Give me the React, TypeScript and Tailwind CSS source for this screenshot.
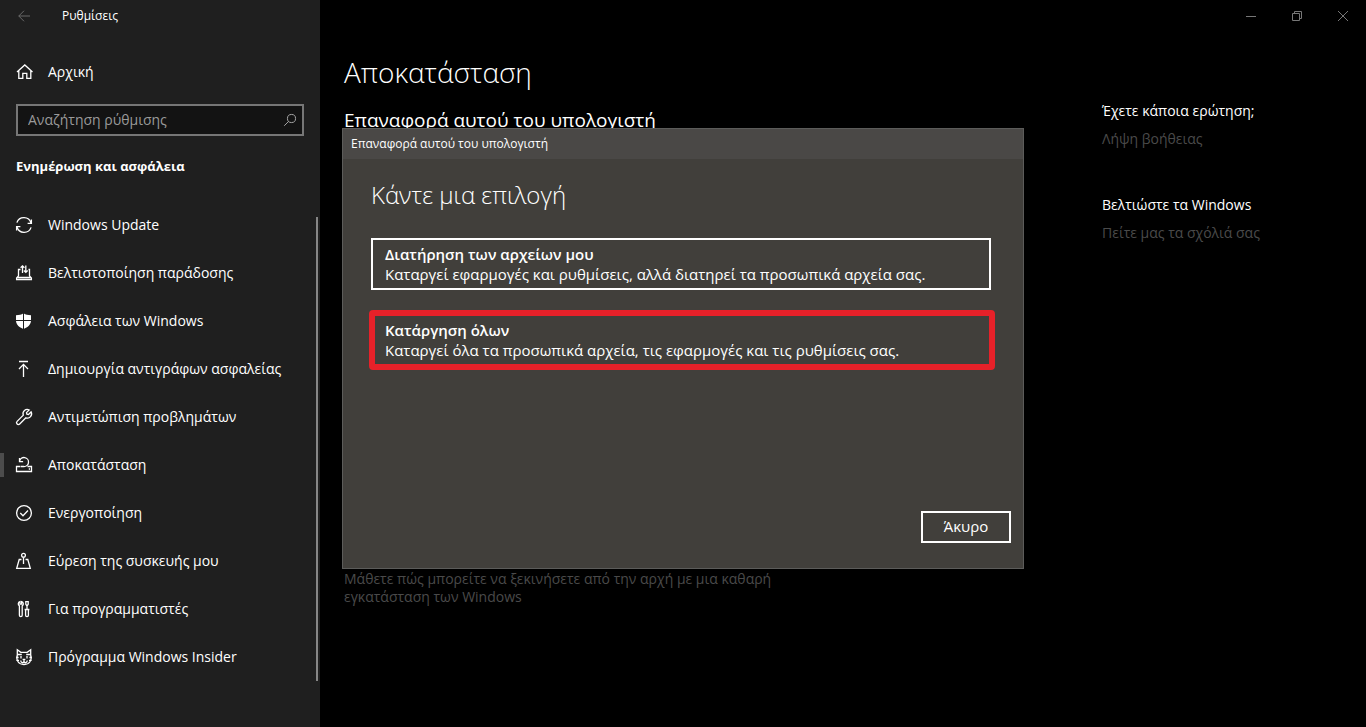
import type { ReactNode } from "react";

const navItems: { label: string; icon: ReactNode; active?: boolean }[] = [
  {
    label: "Windows Update",
    icon: (
      <>
        <path d="M.9 5.6A7.4 7.4 0 0 1 15 6M15.1 10.4A7.4 7.4 0 0 1 1 10" />
        <path d="M15.4 2.6V6.4H11.6M.6 13.4V9.6H4.4" />
      </>
    ),
  },
  {
    label: "Βελτιστοποίηση παράδοσης",
    icon: (
      <>
        <path d="M4.5 4.5H2.5V10.8L.6 13V14.5H15.4V13L13.5 10.8V4.5H12.5M1.5 12.5H14.5" />
        <path d="M6.5 8V1M4.6 2.8L6.5 .9L8.4 2.8M9.8 .5V7.3M7.9 5.5L9.8 7.4L11.7 5.5" />
      </>
    ),
  },
  {
    label: "Ασφάλεια των Windows",
    icon: (
      <>
        <path
          d="M7.5.3C9.5 1.7 12 2.2 15 2.3V7.5C15 11.7 11.8 14.3 7.5 16C3.2 14.3 0 11.7 0 7.5V2.3C3 2.2 5.5 1.7 7.5.3Z"
          fill="currentColor"
          stroke="none"
        />
        <path d="M7.5 0V16M0 7.5H15" stroke="#1f1f1f" strokeWidth="1" />
      </>
    ),
  },
  {
    label: "Δημιουργία αντιγράφων ασφαλείας",
    icon: <path d="M3 .5H12M7.5 16V3.5M3 8L7.5 3.4L12 8" />,
  },
  {
    label: "Αντιμετώπιση προβλημάτων",
    icon: (
      <path d="M13.2 1A4.2 4.2 0 0 0 7.3 6.2L1.1 12.4A1.8 1.8 0 0 0 3.7 15L9.9 8.8A4.2 4.2 0 0 0 15.1 2.9L12.5 5.5L10.9 5.2L10.5 3.6Z" />
    ),
  },
  {
    label: "Αποκατάσταση",
    active: true,
    icon: (
      <>
        <path d="M4.5 9.5H.5V14.5H15.5V9.5H11.5M12.8 12H14" />
        <path d="M3.6 4.2A4.5 4.5 0 1 1 7.6 9.5H5M3.5 1V4.6H7.1" />
      </>
    ),
  },
  {
    label: "Ενεργοποίηση",
    icon: (
      <>
        <circle cx="8" cy="8" r="7.4" />
        <path d="M4.3 8L7 10.7L12 5.5" />
      </>
    ),
  },
  {
    label: "Εύρεση της συσκευής μου",
    icon: (
      <>
        <circle cx="7.5" cy="2.2" r="1.9" />
        <path d="M7.5 4.2V11M5.5 6.5H3.2L.7 15.4H14.3L11.8 6.5H9.5" />
      </>
    ),
  },
  {
    label: "Για προγραμματιστές",
    icon: (
      <>
        <path d="M4 .6V3.2H5.6V.6A2.3 2.3 0 0 1 6.2 4.8V14.3A1.4 1.4 0 0 1 3.4 14.3V4.8A2.3 2.3 0 0 1 4 .6Z" />
        <path d="M9.8.6H12.2V3.2L11 5L9.8 3.2ZM11 5V8.5M8.6 8.5H13.4M9.6 8.5V14.3A1.4 1.4 0 0 0 12.4 14.3V8.5" />
      </>
    ),
  },
  {
    label: "Πρόγραμμα Windows Insider",
    icon: (
      <>
        <path d="M1.3 6V.8L4.8 3.3H11.2L14.7.8V6C15.3 8 15.2 11 13.8 13C12.4 15 10 15.5 8 15.5C6 15.5 3.6 15 2.2 13C.8 11 .7 8 1.3 6Z" />
        <path d="M1.5 5.5H5.8M14.5 5.5H10.2M5 7V9.4M11 7V9.4M.2 8.5H2.6M.4 11.3H3M15.8 8.5H13.4M15.6 11.3H13M6.6 10.4H9.4M8 10.8V12.4M4.8 11.5C4.8 14 7 14.4 8 12.6C9 14.4 11.2 14 11.2 11.5" />
      </>
    ),
  },
];

function Icon({ children, className = "size-4" }: { children: ReactNode; className?: string }) {
  return (
    <svg viewBox="0 0 16 16" fill="none" stroke="currentColor" strokeWidth="1.3" className={`${className} shrink-0 overflow-visible`} aria-hidden="true">
      {children}
    </svg>
  );
}

function Sidebar() {
  return (
    <aside className="w-80 shrink-0 bg-[#1f1f1f]">
      <div className="flex h-8 items-center">
        <button aria-label="Πίσω" className="flex w-12 justify-center text-[#6b6b6b]">
          <Icon className="size-3">
            <path d="M16 8H1M8 1L1 8L8 15" />
          </Icon>
        </button>
        <span className="pl-3.5 text-xs">Ρυθμίσεις</span>
      </div>

      <a href="#home" className="mt-4 flex h-12 items-center gap-4 px-4">
        <Icon>
          <path d="M1 8L8.8 1L16.5 8M2.8 6.8V14.4H6.8V9.4H10.8V14.4H14.8V6.8" />
        </Icon>
        Αρχική
      </a>

      <label className="mx-4 mt-2 flex h-8 items-center border-2 border-[#767676] bg-[#131313] pr-1.5 pl-2.5">
        <input
          type="search"
          aria-label="Αναζήτηση ρύθμισης"
          placeholder="Αναζήτηση ρύθμισης"
          className="min-w-0 flex-1 bg-transparent outline-none placeholder:text-[#9a9a9a]"
        />
        <Icon className="size-3 text-[#a8a8a8]">
          <circle cx="10" cy="6" r="5.4" />
          <path d="M6.2 9.8L.3 15.7" />
        </Icon>
      </label>

      <h2 className="mt-5 px-4 text-[13px] leading-5 font-bold">Ενημέρωση και ασφάλεια</h2>

      <div className="mt-[25px] flex">
        <nav className="flex-1">
          {navItems.map((item) => (
            <a key={item.label} href="#" className="flex h-12 items-center">
              <span className={item.active ? "h-6 w-1 bg-[#4c4c4c]" : "w-1"} />
              <span className="mr-4 ml-3">
                <Icon>{item.icon}</Icon>
              </span>
              {item.label}
            </a>
          ))}
        </nav>
        <div className="mt-4 mr-0.5 w-0.5 bg-[#868686]" />
      </div>
    </aside>
  );
}

function WindowControls() {
  return (
    <div className="flex h-8 justify-end text-[#777777]">
      <button aria-label="Ελαχιστοποίηση" className="flex w-[46px] items-center justify-center">
        <svg viewBox="0 0 10 10" className="size-2.5" stroke="currentColor" fill="none">
          <path d="M0 5.5H10" />
        </svg>
      </button>
      <button aria-label="Επαναφορά" className="flex w-[46px] items-center justify-center">
        <svg viewBox="0 0 10 10" className="size-2.5" stroke="currentColor" fill="none">
          <path d="M.5 2.5H7.5V9.5H.5ZM2.5 2.5V.5H9.5V7.5H7.5" />
        </svg>
      </button>
      <button aria-label="Κλείσιμο" className="flex w-[46px] items-center justify-center">
        <svg viewBox="0 0 10 10" className="size-2.5" stroke="currentColor" fill="none">
          <path d="M0 0L10 10M10 0L0 10" />
        </svg>
      </button>
    </div>
  );
}

function ResetDialog() {
  return (
    <div className="absolute inset-0 flex items-start justify-center pt-32">
      <div role="dialog" aria-labelledby="reset-title" className="w-full max-w-[682px] border border-[#5c5c5a] bg-[#413f3b] text-[15px]">
        <div id="reset-title" className="flex h-[30px] items-center bg-[#4a4846] px-2 text-xs">
          Επαναφορά αυτού του υπολογιστή
        </div>
        <div className="px-7 pt-5">
          <h2 className="text-2xl leading-8 font-light">Κάντε μια επιλογή</h2>
          <button className="mt-[27px] block h-[52px] w-full max-w-[620px] border-2 border-white px-3 text-left leading-5">
            <strong className="block font-semibold">Διατήρηση των αρχείων μου</strong>
            Καταργεί εφαρμογές και ρυθμίσεις, αλλά διατηρεί τα προσωπικά αρχεία σας.
          </button>
          <button className="-mx-0.5 mt-5 block h-[60px] w-[626px] rounded-sm border-6 border-[#e62129] px-2.5 text-left leading-5">
            <strong className="block font-semibold">Κατάργηση όλων</strong>
            Καταργεί όλα τα προσωπικά αρχεία, τις εφαρμογές και τις ρυθμίσεις σας.
          </button>
        </div>
        <div className="mt-[141px] flex justify-end pr-3 pb-[25px]">
          <button className="h-8 w-[90px] border-2 border-white">Άκυρο</button>
        </div>
      </div>
    </div>
  );
}

export default function App() {
  return (
    <div className="relative flex min-h-screen bg-black font-['Open_Sans','Noto_Sans',sans-serif] text-sm text-white">
      <Sidebar />
      <div className="flex-1">
        <WindowControls />
        <div className="flex justify-between pl-6">
          <main className="max-w-[440px] pt-5">
            <h1 className="text-[28px] leading-10 font-light">Αποκατάσταση</h1>
            <h2 className="mt-3.5 text-[19px] leading-7">Επαναφορά αυτού του υπολογιστή</h2>
            <a href="#" className="mt-[436px] block leading-[18px] text-[#4a4a4a]">
              Μάθετε πώς μπορείτε να ξεκινήσετε από την αρχή με μια καθαρή εγκατάσταση των Windows
            </a>
          </main>
          <section className="w-[264px] shrink-0 pt-[69px] leading-5">
            <h3 className="font-medium">Έχετε κάποια ερώτηση;</h3>
            <a href="#" className="mt-2 block text-[#4a4a4a]">Λήψη βοήθειας</a>
            <h3 className="mt-[46px] font-medium">Βελτιώστε τα Windows</h3>
            <a href="#" className="mt-2 block text-[#4a4a4a]">Πείτε μας τα σχόλιά σας</a>
          </section>
        </div>
      </div>
      <ResetDialog />
    </div>
  );
}
